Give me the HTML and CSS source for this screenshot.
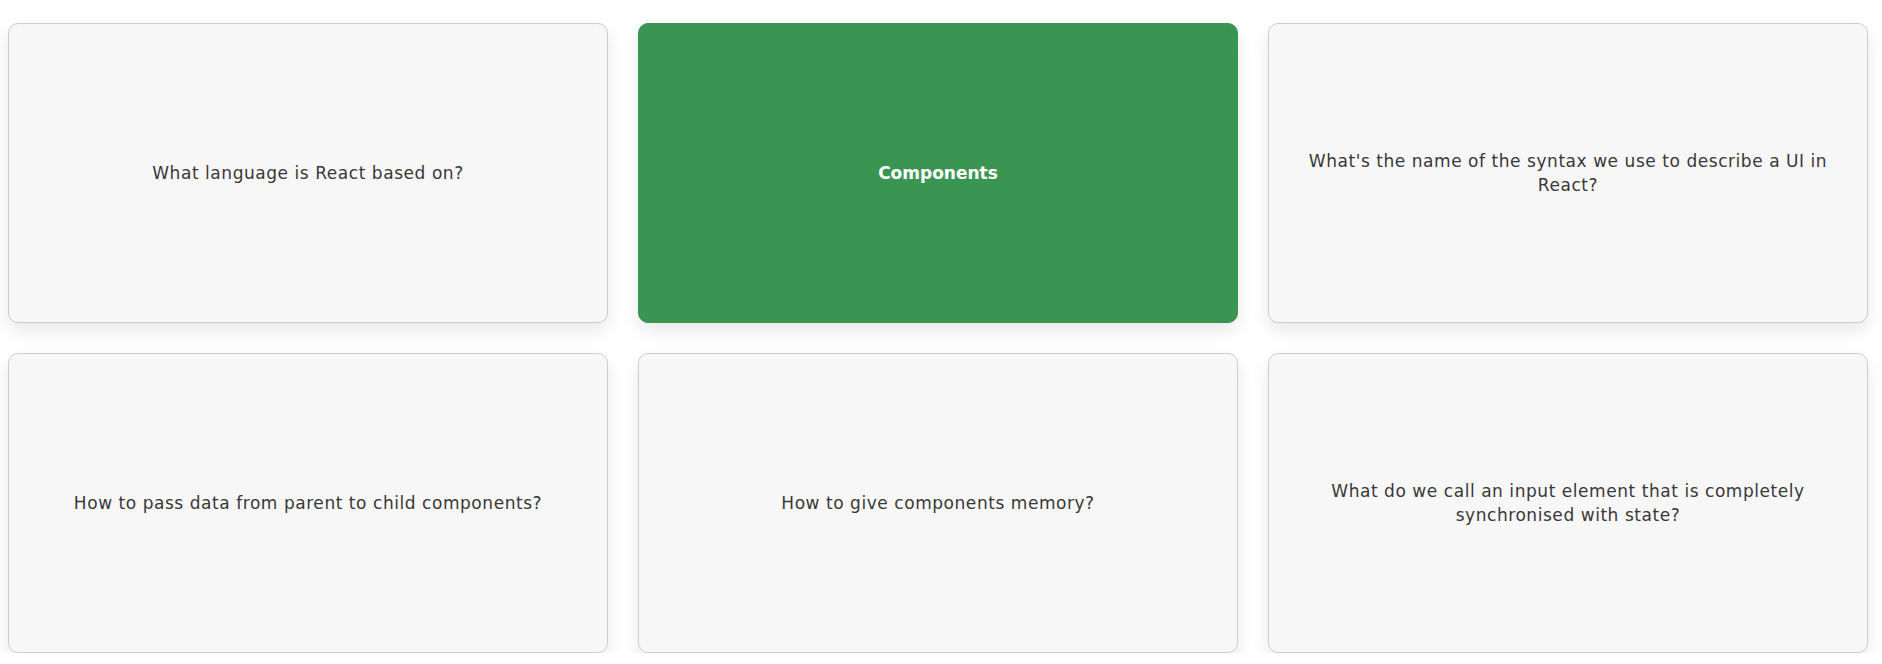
FILE: index.html
```html
<!DOCTYPE html>
<html lang="en">
<head>
<meta charset="utf-8">
<title>Flashcards</title>
<link rel="stylesheet" href="styles.css">
</head>
<body>
<div class="flashcards">
  <div class="card"><p>What language is React based on?</p></div>
  <div class="card selected"><p>Components</p></div>
  <div class="card"><p>What's the name of the syntax we use to describe a UI in React?</p></div>
  <div class="card"><p>How to pass data from parent to child components?</p></div>
  <div class="card"><p>How to give components memory?</p></div>
  <div class="card"><p>What do we call an input element that is completely synchronised with state?</p></div>
</div>
</body>
</html>
```

FILE: styles.css
```css
* { box-sizing: border-box; }
html, body { margin: 0; padding: 0; background: #ffffff; }
body {
  font-family: "DejaVu Sans", "Open Sans", sans-serif;
  color: #383838;
  padding: 23px 0 0 8px;
}
.flashcards {
  display: grid;
  grid-template-columns: repeat(3, 600px);
  grid-auto-rows: 300px;
  gap: 30px;
}
.card {
  display: flex;
  align-items: center;
  justify-content: center;
  text-align: center;
  padding: 0 32px;
  background: #f7f7f7;
  border: 1px solid #cdcdcd;
  border-radius: 10px;
  box-shadow: 0 8px 18px rgba(0, 0, 0, 0.09);
}
.card p {
  margin: 0;
  font-size: 17px;
  line-height: 24px;
  font-weight: 400;
  letter-spacing: 0.55px;
}
.card.selected {
  background: #3b9552;
  border-color: #3b9552;
  color: #ffffff;
}
.card.selected p { font-weight: 700; letter-spacing: 0; }
```
